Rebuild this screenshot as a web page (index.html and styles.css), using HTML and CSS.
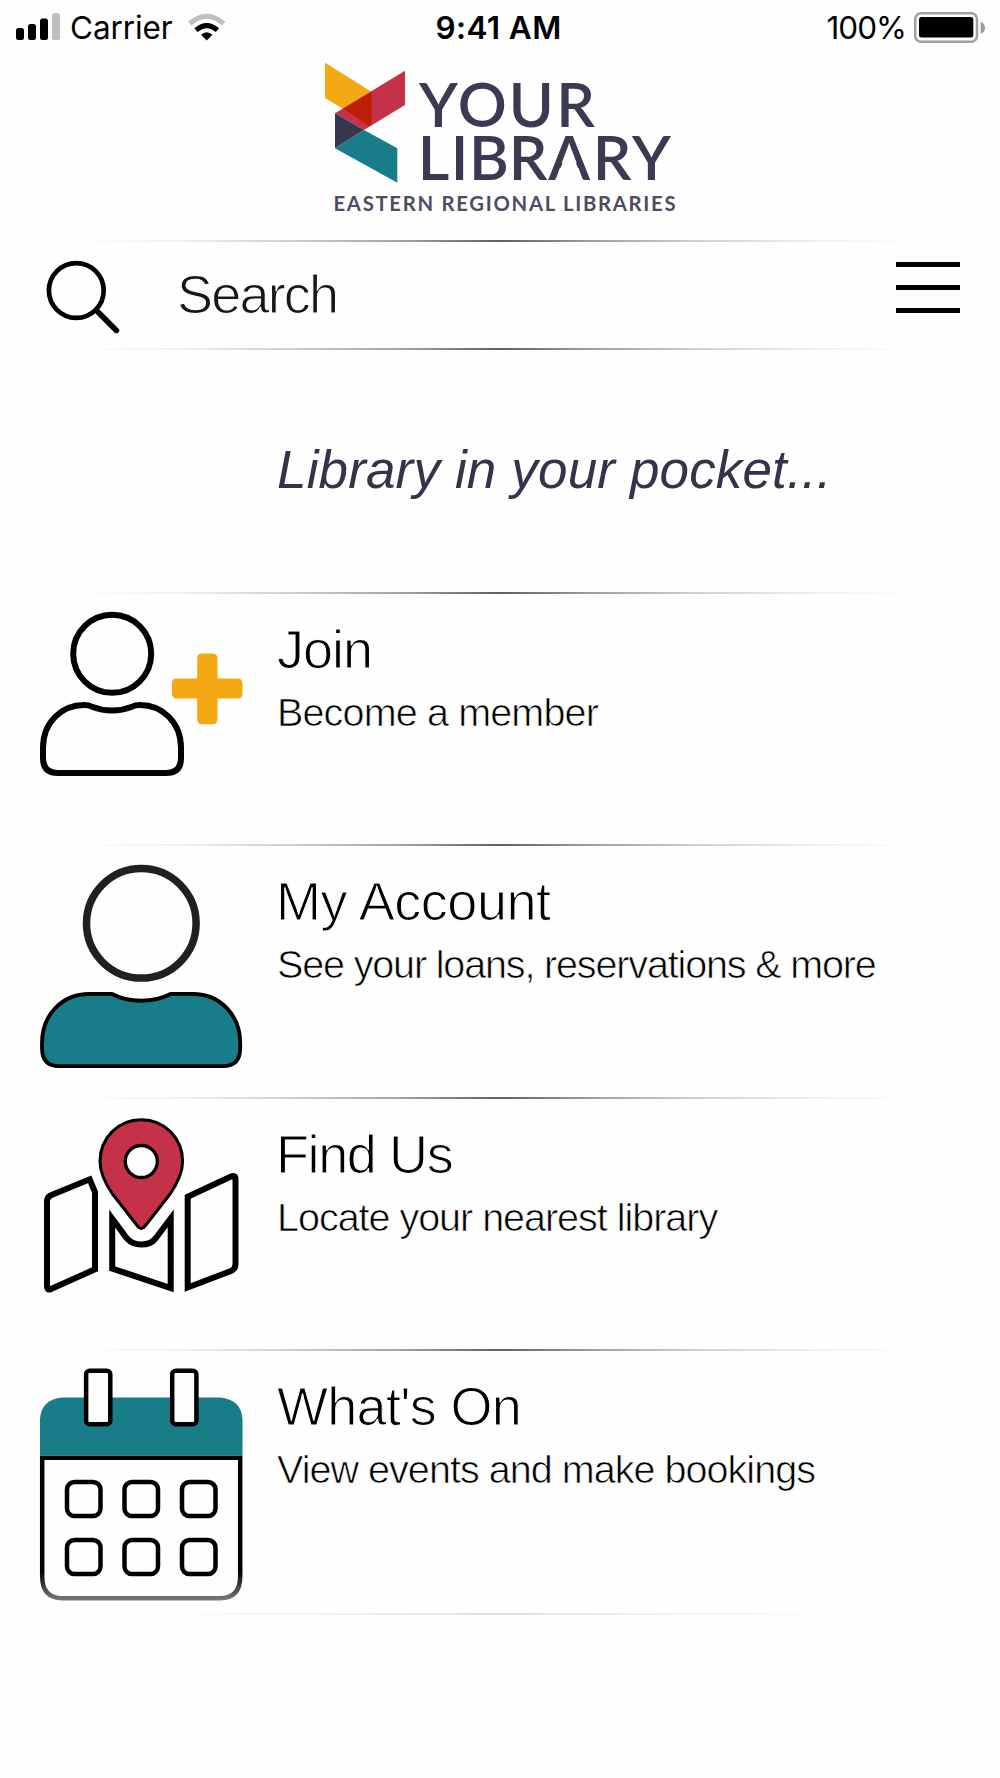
FILE: index.html
```html
<!DOCTYPE html>
<html lang="en">
<head>
<meta charset="utf-8">
<title>Your Library</title>
<link rel="stylesheet" href="styles.css">
</head>
<body>
<div class="status">
  <div class="status-left">
    <svg class="signal" width="44" height="27" viewBox="16 13 44 27">
      <rect x="16" y="28" width="8" height="12" rx="2.5"/>
      <rect x="28" y="24" width="8" height="16" rx="2.5"/>
      <rect x="40" y="18.500" width="8" height="21.500" rx="2.500"/>
      <rect class="dim" x="52" y="13" width="8" height="27" rx="2.5"/>
    </svg>
    <span class="carrier">Carrier</span>
    <svg class="wifi" width="38" height="28" viewBox="188 13 38 28">
      <path class="wifi-dim" d="M189.700 23.500Q206.700 9 223.700 23.500"/>
      <path class="wifi-on" d="M196 30.200Q206.700 21 217.400 30.200"/>
      <path d="M201 34.800Q206.700 29.800 212.400 34.800L206.700 40.400Z"/>
    </svg>
  </div>
  <span class="clock">9:41 AM</span>
  <div class="status-right">
    <span class="percent">100%</span>
    <svg width="72" height="32" viewBox="914 12 72 32">
      <rect class="shell" x="915.200" y="13.200" width="61.800" height="28.600" rx="6"/>
      <rect x="919" y="17" width="54.300" height="20.600" rx="2.500"/>
      <path class="nub" d="M980.700 21.500C986.500 24 986.500 31.500 980.700 34Z"/>
    </svg>
  </div>
</div>

<header class="brand">
  <svg width="356" height="156" viewBox="322 58 356 156">
    <g transform="translate(300 50) scale(.33333)">
      <path class="amber" d="M75 38L215 125V228L75 144Z"/>
      <path class="red" d="M315 62V165L192 240L105 190Z"/>
      <path class="deep-red" d="M215 125V222L206 228L130 176Z"/>
      <path class="navy" d="M105 190L192 240L105 295Z"/>
      <path class="teal" d="M192 240L292 295V398L105 295Z"/>
    </g>
    <text class="word" y="126.500" x="438.300 482.200 531.200 575.500">YOUR</text>
    <text class="word" y="179.500" x="433.500 459.500 489 528 569.300 612 651.300">LIBRARY</text>
    <path class="knock" d="M569.300 147L558.300 173.500H580.300Z"/>
    <text class="sub-word" x="333.500" y="210.700" textLength="342">EASTERN REGIONAL LIBRARIES</text>
  </svg>
</header>

<div class="rule"></div>
<div class="search">
  <svg width="76" height="76" viewBox="44 258 76 76">
    <circle class="lens" cx="76.300" cy="290.500" r="27.400"/>
    <path class="handle" d="M97.500 311.500L116.400 330.400"/>
  </svg>
  <span class="search-label">Search</span>
  <div class="menu"><i></i><i></i><i></i></div>
</div>
<div class="rule"></div>

<p class="tagline">Library in your pocket...</p>

<main>
  <div class="row">
    <div class="rule"></div>
    <svg class="icon" width="210" height="180" viewBox="36 606 210 180">
      <circle class="line6" cx="112.200" cy="653.700" r="39"/>
      <path class="line6" d="M43 758V748C43 722 62 705 84 705C88 705 90 705.500 92 706.700Q112 714.500 132 706.700C134 705.500 136 705 140 705C162 705 181 722 181 748V758Q181 773 166 773H58Q43 773 43 758Z"/>
      <g class="plus"><rect x="197.200" y="653.500" width="20.300" height="70.700" rx="4.500"/><rect x="172" y="678.500" width="70.500" height="20" rx="4.500"/></g>
    </svg>
    <div class="text"><h2 class="h-join">Join</h2><p class="t1">Become a member</p></div>
  </div>
  <div class="row">
    <div class="rule"></div>
    <svg class="icon" width="210" height="220" viewBox="36 858 210 220">
      <circle class="head" cx="141.300" cy="923.300" r="54.800"/>
      <path class="torso" d="M42 1043C42 1014 63 994 89 994H112C129 1003 153.500 1003 170.500 994H193C219 994 240.200 1014 240.200 1043V1048Q240.200 1066.200 223 1066.200H59Q42 1066.200 42 1048Z"/>
    </svg>
    <div class="text"><h2 class="h-account">My Account</h2><p class="t2">See your loans, reservations &amp; more</p></div>
  </div>
  <div class="row">
    <div class="rule"></div>
    <svg class="icon" width="210" height="200" viewBox="36 1111 210 200">
      <path class="line6" d="M47 1286V1201Q47 1197 51.500 1195L89.700 1179.300L95 1192V1269.300L51 1289Q47 1291 47 1286Z"/>
      <path class="line6" d="M112.200 1218.500V1268.500L170.700 1288V1218.500L155.500 1238.500C149 1246.500 134 1246.500 127 1238.500Z"/>
      <path class="line6" d="M187.700 1196.800L230.500 1176.800Q235.500 1174.500 235.500 1179V1264Q235.500 1269 231 1271L187.700 1287.500Z"/>
      <path class="pin" d="M141.300 1119.800C118 1119.800 100 1138 100 1161.500C100 1174 107 1186 112.500 1194L137.500 1226Q141.300 1231 145.100 1226L170.100 1194C175.600 1186 182.600 1174 182.600 1161.500C182.600 1138 164.600 1119.800 141.300 1119.800Z"/>
      <circle class="hole" cx="141.300" cy="1161.500" r="16"/>
    </svg>
    <div class="text"><h2 class="h-find">Find Us</h2><p class="t3">Locate your nearest library</p></div>
  </div>
  <div class="row last">
    <div class="rule"></div>
    <svg class="icon" width="210" height="246" viewBox="36 1363.500 210 246">
      <defs>
        <linearGradient id="fade" gradientUnits="userSpaceOnUse" x1="0" y1="1572" x2="0" y2="1602">
          <stop offset="0" stop-color="#000"/><stop offset="1" stop-color="#808080"/>
        </linearGradient>
      </defs>
      <path class="page" stroke="url(#fade)" d="M42.200 1458.300H240.200V1577Q240.200 1598.700 220 1598.700H62Q42.200 1598.700 42.200 1577Z"/>
      <path class="teal" d="M40 1456V1420Q41 1400 62 1398H220Q241.500 1400 242.500 1420V1456Z"/>
      <g class="cells">
        <rect x="86.100" y="1371.200" width="24.200" height="53.600" rx="3.500"/>
        <rect x="172.200" y="1371.200" width="24.200" height="53.600" rx="3.500"/>
        <rect x="67" y="1482.500" width="33.500" height="34" rx="7.500"/>
        <rect x="124.500" y="1482.500" width="33.500" height="34" rx="7.500"/>
        <rect x="182" y="1482.500" width="33.500" height="34" rx="7.500"/>
        <rect x="67" y="1540.500" width="33.500" height="34" rx="7.500"/>
        <rect x="124.500" y="1540.500" width="33.500" height="34" rx="7.500"/>
        <rect x="182" y="1540.500" width="33.500" height="34" rx="7.500"/>
      </g>
    </svg>
    <div class="text"><h2 class="h-on">What's On</h2><p class="t4">View events and make bookings</p></div>
  </div>
  <div class="rule faint"></div>
</main>
</body>
</html>
```
FILE: styles.css
```css
* { box-sizing: border-box; }
body {
  margin: 0;
  width: 1000px;
  height: 1778px;
  overflow: hidden;
  background: #fefefe;
  color: #000;
  font-family: "Liberation Sans", Arial, sans-serif;
}
svg { display: block; }
h2, p { margin: 0; }

.status {
  display: grid;
  grid-template-columns: 1fr auto 1fr;
  align-items: start;
  height: 58px;
  padding: 0 14px 0 16px;
  font-family: Inter, sans-serif;
  font-size: 31.5px;
  line-height: 56px;
  white-space: nowrap;
}
.status-left, .status-right { display: flex; }
.status-right { justify-content: flex-end; }
.signal { margin-top: 13px; }
.status-right svg { margin-top: 12px; }
.carrier { margin-left: 10px; width: 118px; letter-spacing: -.1px; }
.wifi { margin-top: 13px; }
.clock { font-weight: 600; letter-spacing: .4px; margin-right: 5px; }
.percent { margin-right: 8px; letter-spacing: -1px; }
.dim { fill: #bfbfbf; }
.nub { fill: #999; }
.wifi-dim, .wifi-on { fill: none; stroke: #bfbfbf; stroke-width: 5; }
.wifi-on { stroke: #000; }
.shell { fill: none; stroke: #a0a0a0; stroke-width: 2.5; }

.brand { height: 182px; padding-left: 322px; }
.amber { fill: #f4a814; }
.red { fill: #c53149; }
.deep-red { fill: #be1e08; }
.navy { fill: #36374f; }
.teal { fill: #187d88; }
.word { font: 600 61px Lato, sans-serif; fill: #3a3b53; text-anchor: middle; }
.sub-word { font: 700 20.3px Lato, sans-serif; fill: #4c4d62; }
.knock { fill: #fefefe; }

.rule {
  height: 2px;
  background: linear-gradient(90deg, transparent 7%, rgba(0,0,0,.05) 18%, rgba(0,0,0,.2) 30%, rgba(0,0,0,.36) 40%, rgba(0,0,0,.62) 50%, rgba(0,0,0,.36) 60%, rgba(0,0,0,.18) 70%, rgba(0,0,0,.05) 82%, transparent 92%);
}
.faint { opacity: .2; }

.search {
  display: flex;
  align-items: flex-start;
  height: 106px;
  padding: 16px 40px 0 44px;
}
.lens, .handle { fill: none; stroke: #000; stroke-width: 4.7; }
.handle { stroke-width: 5.6; stroke-linecap: round; }
.search-label {
  flex: 1;
  margin: 9px 0 0 57px;
  font-size: 54px;
  line-height: 54px;
  letter-spacing: -1.8px;
  color: #161616;
  -webkit-text-stroke: 1.1px #fefefe;
}
.menu { display: flex; flex-direction: column; gap: 18px; width: 64px; padding-top: 4px; }
.menu i { height: 5px; background: #000; }

.tagline {
  height: 242px;
  padding: 92px 0 0 277px;
  font-size: 53px;
  line-height: 56px;
  font-style: italic;
  letter-spacing: .15px;
  color: #33344c;
}

.row {
  display: grid;
  grid-template-columns: 275px 1fr;
  grid-template-rows: 2px 1fr;
  height: 252.330px;
}
.row > .rule { grid-column: 1 / 3; }
.last { height: 264px; }
.icon { margin: 12px 0 0 36px; }
.line6 { fill: none; stroke: #000; stroke-width: 6; }
.plus { fill: #f4a814; }
.head { fill: none; stroke: #231f20; stroke-width: 7.500; }
.torso { fill: #187d88; stroke: #000; stroke-width: 3.800; }
.pin { fill: #c53149; stroke: #000; stroke-width: 3; }
.hole { fill: #fefefe; stroke: #000; stroke-width: 3.300; }
.page { fill: none; stroke-width: 4.500; }
.cells { fill: #fefefe; stroke: #000; stroke-width: 4.500; }

.text { padding-top: 28px; display: flex; flex-direction: column; gap: 16px; white-space: nowrap; }
.text h2 {
  font-size: 54px;
  line-height: 54px;
  font-weight: 400;
  padding-left: 2px;
  -webkit-text-stroke: 1.1px #fefefe;
}
.text p { font-size: 39.500px; line-height: 40px; padding-left: 2px; -webkit-text-stroke: .7px #fefefe; }
.text .h-join { letter-spacing: -1px; }
.text .h-account { letter-spacing: -.45px; padding-left: 1px; }
.text .h-find { letter-spacing: -1.400px; padding-left: 1px; }
.text .h-on { letter-spacing: -.7px; }
.t1 { letter-spacing: -.85px; }
.t2 { letter-spacing: -1.150px; }
.t3 { letter-spacing: -1.020px; }
.t4 { letter-spacing: -.960px; }
```
